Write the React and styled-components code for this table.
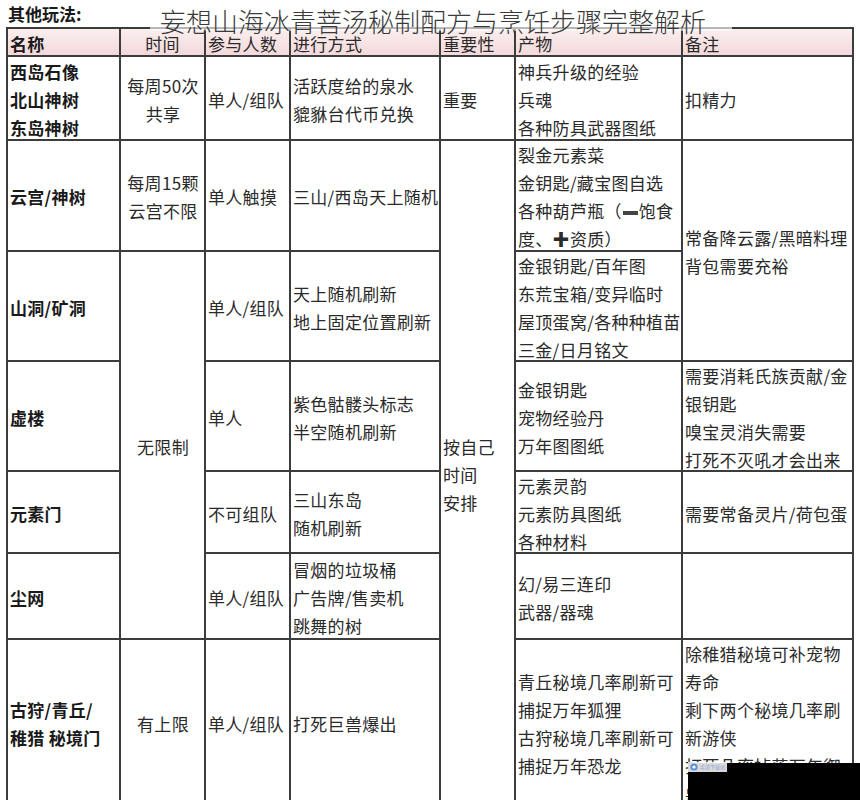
import { styled, createGlobalStyle } from 'styled-components';

const GlobalStyle = createGlobalStyle`
  html, body {
    margin: 0;
    padding: 0;
    background: #fff;
  }
  body {
    font-family: 'Noto Sans CJK SC', 'Noto Sans', sans-serif;
    color: #222;
  }
`;

const cells = [
  // header
  { c: 1, r: 1, t: ['名称'], head: true, bold: true },
  { c: 2, r: 1, t: ['时间'], head: true, center: true },
  { c: 3, r: 1, t: ['参与人数'], head: true },
  { c: 4, r: 1, t: ['进行方式'], head: true },
  { c: 5, r: 1, t: ['重要性'], head: true },
  { c: 6, r: 1, t: ['产物'], head: true },
  { c: 7, r: 1, t: ['备注'], head: true },
  // row 1
  { c: 1, r: 2, t: ['西岛石像', '北山神树', '东岛神树'], bold: true },
  { c: 2, r: 2, t: ['每周50次', '共享'], center: true },
  { c: 3, r: 2, t: ['单人/组队'] },
  { c: 4, r: 2, t: ['活跃度给的泉水', '貔貅台代币兑换'] },
  { c: 5, r: 2, t: ['重要'] },
  { c: 6, r: 2, t: ['神兵升级的经验', '兵魂', '各种防具武器图纸'] },
  { c: 7, r: 2, t: ['扣精力'] },
  // row 2
  { c: 1, r: 3, t: ['云宫/神树'], bold: true },
  { c: 2, r: 3, t: ['每周15颗', '云宫不限'], center: true },
  { c: 3, r: 3, t: ['单人触摸'] },
  { c: 4, r: 3, t: ['三山/西岛天上随机'] },
  { c: 5, r: 3, span: 6, t: ['按自己', '时间', '安排'] },
  {
    c: 6,
    r: 3,
    t: [
      '裂金元素菜',
      '金钥匙/藏宝图自选',
      <>
        各种葫芦瓶（<Bar />饱食
      </>,
      '度、✚资质）',
    ],
  },
  { c: 7, r: 3, span: 2, t: ['常备降云露/黑暗料理', '背包需要充裕'] },
  // row 3
  { c: 1, r: 4, t: ['山洞/矿洞'], bold: true },
  { c: 2, r: 4, span: 4, t: ['无限制'], center: true },
  { c: 3, r: 4, t: ['单人/组队'] },
  { c: 4, r: 4, t: ['天上随机刷新', '地上固定位置刷新'] },
  { c: 6, r: 4, t: ['金银钥匙/百年图', '东荒宝箱/变异临时', '屋顶蛋窝/各种种植苗', '三金/日月铭文'] },
  // row 4
  { c: 1, r: 5, t: ['虚楼'], bold: true },
  { c: 3, r: 5, t: ['单人'] },
  { c: 4, r: 5, t: ['紫色骷髅头标志', '半空随机刷新'] },
  { c: 6, r: 5, t: ['金银钥匙', '宠物经验丹', '万年图图纸'] },
  { c: 7, r: 5, t: ['需要消耗氏族贡献/金', '银钥匙', '嗅宝灵消失需要', '打死不灭吼才会出来'] },
  // row 5
  { c: 1, r: 6, t: ['元素门'], bold: true },
  { c: 3, r: 6, t: ['不可组队'] },
  { c: 4, r: 6, t: ['三山东岛', '随机刷新'] },
  { c: 6, r: 6, t: ['元素灵韵', '元素防具图纸', '各种材料'] },
  { c: 7, r: 6, t: ['需要常备灵片/荷包蛋'] },
  // row 6
  { c: 1, r: 7, t: ['尘网'], bold: true },
  { c: 3, r: 7, t: ['单人/组队'] },
  { c: 4, r: 7, t: ['冒烟的垃圾桶', '广告牌/售卖机', '跳舞的树'] },
  { c: 6, r: 7, t: ['幻/易三连印', '武器/器魂'] },
  { c: 7, r: 7, t: [] },
  // row 7
  { c: 1, r: 8, t: ['古狩/青丘/', '稚猎 秘境门'], bold: true },
  { c: 2, r: 8, t: ['有上限'], center: true },
  { c: 3, r: 8, t: ['单人/组队'] },
  { c: 4, r: 8, t: ['打死巨兽爆出'] },
  { c: 6, r: 8, t: ['青丘秘境几率刷新可', '捕捉万年狐狸', '古狩秘境几率刷新可', '捕捉万年恐龙'] },
  {
    c: 7,
    r: 8,
    t: ['除稚猎秘境可补宠物', '寿命', '剩下两个秘境几率刷', '新游侠', '打死几率掉落万年御', '兽蛋'],
  },
];

function Bar() {
  return <Dash />;
}

const App = () => {
  return (
    <>
      <GlobalStyle />
      <Page>
        <Caption>其他玩法:</Caption>
        <Grid>
          {cells.map((cell, i) => (
            <Cell
              key={i}
              $col={cell.c}
              $row={cell.r}
              $span={cell.span || 1}
              $head={cell.head}
              $bold={cell.bold}
              $center={cell.center}
            >
              {cell.t.map((line, j) => (
                <Line key={j}>{line}</Line>
              ))}
            </Cell>
          ))}
        </Grid>
        <Title>妄想山海冰青菩汤秘制配方与烹饪步骤完整解析</Title>
        <Cover>
          <Mark>
            <svg width='8' height='8' viewBox='0 0 8 8'>
              <circle cx='4' cy='4' r='3.6' fill='#5b8fe0' />
              <circle cx='4' cy='4' r='1.6' fill='#fff' />
            </svg>
            <MarkText>手游下载站</MarkText>
          </Mark>
        </Cover>
      </Page>
    </>
  );
};

const Page = styled.div`
  position: relative;
  width: 860px;
  height: 800px;
  overflow: hidden;
  background: #fff;
`;

const Caption = styled.div`
  height: 27px;
  padding-left: 8px;
  font-size: 17px;
  font-weight: 700;
  line-height: 27px;
  color: #1a1a1a;
`;

const Grid = styled.div`
  display: grid;
  grid-template-columns: 111px 83px 83px 148px 73px 165px 169px;
  grid-template-rows: 26px 82px 109px 108px 108px 80px 84px 165px;
  gap: 2px;
  padding: 2px;
  margin-left: 6px;
  width: max-content;
  background: #3c3c3c;
`;

const Cell = styled.div`
  grid-column: ${(p) => p.$col};
  grid-row: ${(p) => p.$row} / span ${(p) => p.$span};
  display: flex;
  flex-direction: column;
  justify-content: center;
  align-items: ${(p) => (p.$center ? 'center' : 'flex-start')};
  padding: ${(p) => (p.$head ? '4px 2px 0' : '3px 1px 0 2px')};
  overflow: hidden;
  background: ${(p) =>
    p.$head ? 'linear-gradient(180deg, #fbeeee 0%, #f3d9db 100%)' : '#fff'};
  font-size: 17px;
  letter-spacing: 0.3px;
  font-weight: ${(p) => (p.$bold ? 700 : 400)};
  line-height: 28px;
  color: ${(p) => (p.$bold ? '#1a1a1a' : '#2a2a2a')};
`;

const Line = styled.span`
  display: block;
  white-space: nowrap;
`;

const Dash = styled.span`
  display: inline-block;
  width: 15px;
  height: 4px;
  margin: 0 1px;
  vertical-align: middle;
  background: #444;
`;

const Title = styled.div`
  position: absolute;
  top: 0;
  left: 150px;
  width: 582px;
  height: 31px;
  padding: 6px 0 0 10px;
  box-sizing: border-box;
  background: linear-gradient(180deg, rgba(255, 255, 255, 0.9), rgba(255, 255, 255, 0.6));
  font-size: 26px;
  font-weight: 300;
  line-height: 30px;
  color: #3a3a3a;
  white-space: nowrap;
`;

const Cover = styled.div`
  position: absolute;
  left: 688px;
  top: 763px;
  width: 172px;
  height: 37px;
  background: #000;
`;

const Mark = styled.div`
  position: absolute;
  left: 0;
  top: -1px;
  display: flex;
  align-items: center;
  gap: 2px;
  padding: 0 2px;
  height: 10px;
  background: rgba(255, 255, 255, 0.85);
`;

const MarkText = styled.span`
  font-size: 5px;
  line-height: 8px;
  color: #8aa8e0;
  white-space: nowrap;
`;

export default App;
